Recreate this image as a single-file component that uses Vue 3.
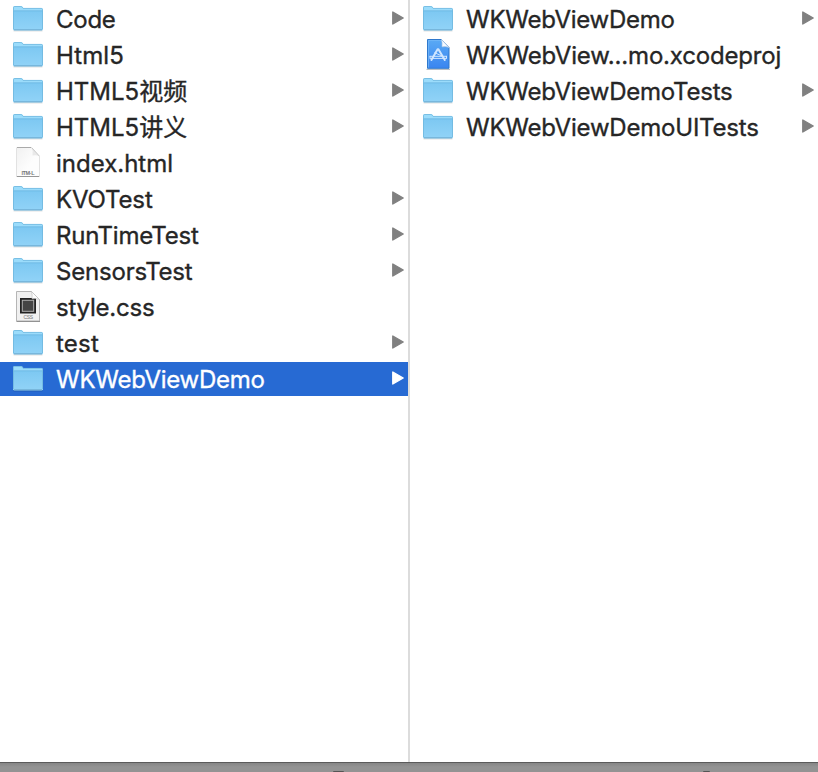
<script setup>
const columns = [
  [
    { name: 'Code', type: 'folder', tracking: -0.25 },
    { name: 'Html5', type: 'folder', tracking: 0.1 },
    { name: 'HTML5视频', type: 'folder', tracking: 0 },
    { name: 'HTML5讲义', type: 'folder', tracking: 0 },
    { name: 'index.html', type: 'html', tracking: 0 },
    { name: 'KVOTest', type: 'folder', tracking: -0.15 },
    { name: 'RunTimeTest', type: 'folder', tracking: -0.2 },
    { name: 'SensorsTest', type: 'folder', tracking: -0.2 },
    { name: 'style.css', type: 'css', tracking: -0.22 },
    { name: 'test', type: 'folder', tracking: 0.2 },
    { name: 'WKWebViewDemo', type: 'folder', tracking: -0.25, selected: true },
  ],
  [
    { name: 'WKWebViewDemo', type: 'folder', tracking: -0.25 },
    { name: 'WKWebView...mo.xcodeproj', type: 'xcode', tracking: -0.18 },
    { name: 'WKWebViewDemoTests', type: 'folder', tracking: -0.23 },
    { name: 'WKWebViewDemoUITests', type: 'folder', tracking: -0.21 },
  ],
]
</script>

<template>
  <main class="browser">
    <svg class="defs" width="0" height="0" aria-hidden="true">
      <defs>
        <linearGradient id="folderFill" x1="0" y1="0" x2="0" y2="1">
          <stop offset="0" stop-color="#7dc8f2" />
          <stop offset="1" stop-color="#91d3f7" />
        </linearGradient>
        <linearGradient id="xcodeFill" x1="0" y1="0" x2="0" y2="1">
          <stop offset="0" stop-color="#5aaaf5" />
          <stop offset="1" stop-color="#3a85f0" />
        </linearGradient>
        <linearGradient id="paperFill" x1="0" y1="0" x2="1" y2="1">
          <stop offset="0" stop-color="#f1f1f1" />
          <stop offset=".6" stop-color="#fdfdfd" />
        </linearGradient>
      </defs>
    </svg>
    <div class="columns">
      <ul v-for="(items, c) in columns" :key="c" class="column">
        <li v-for="item in items" :key="item.name" class="row" :class="{ selected: item.selected }">
          <svg v-if="item.type === 'folder'" class="icon" viewBox="0 0 32 34">
            <path d="M1.5 28.800h29" stroke="#000" stroke-opacity=".2" />
            <path d="M1 27V5.500Q1 4 2.500 4H9q1 0 1.600.8l.8 1.100H29.500Q31 5.900 31 7.400V27Q31 28.300 29.700 28.300H2.300Q1 28.300 1 27Z" fill="#9bdcfb" />
            <path d="M1 9H31V27Q31 28.300 29.700 28.300H2.300Q1 28.300 1 27Z" fill="url(#folderFill)" />
            <path d="M1.500 8.800h29" stroke="#68b4df" stroke-width=".8" />
            <path d="M1.500 27V5.700Q1.500 4.500 2.700 4.500H8.800q.9 0 1.400.7l.9 1.200H29.300Q30.500 6.400 30.500 7.600V27" fill="none" stroke="#6db5dc" stroke-opacity=".75" />
            <path d="M2 27.800H30" stroke="#6eacd0" />
          </svg>
          <svg v-else-if="item.type === 'html'" class="icon" viewBox="0 0 32 34">
            <path d="M5 1.500H20L27 9.500V30.500H5Z" fill="url(#paperFill)" />
            <path d="M4.500 30.500V1.500M27.500 10V30.500" stroke="#e2e2e2" />
            <path d="M5 1.500H19" stroke="#aaa" />
            <path d="M19.500 1.500Q21.500 5 20.500 9.500Q25 8.500 27 10.500Z" fill="#e9e9e9" />
            <path d="M19.500 1.500L27.300 10" stroke="#c4c4c4" />
            <path d="M4.800 30.500H27.200" stroke="#969696" />
            <text x="9.500" y="28.500" textLength="13" class="stamp">ITM·L</text>
          </svg>
          <svg v-else-if="item.type === 'css'" class="icon" viewBox="0 0 32 34">
            <path d="M4.500 1.500H19.500L27.500 9.500V31H4.500Z" fill="#f0f0f0" stroke="#b5b5b5" />
            <path d="M4.500 31.500H28" stroke="#929292" />
            <rect x="8" y="8" width="16" height="15.500" fill="#222" />
            <rect x="10.300" y="10.300" width="11.400" height="11" fill="#444" stroke="#b0b0b0" />
            <path d="M19.500 1.500Q20.500 5 20 8.800Q24 8 27.500 9.500Z" fill="#fff" stroke="#bbb" stroke-width=".6" />
            <text x="11.500" y="29" textLength="9.500" class="stamp light">CSS</text>
          </svg>
          <svg v-else class="icon" viewBox="0 0 32 34">
            <path d="M4.500 31.400H28" stroke="#8b9198" stroke-opacity=".65" />
            <path d="M5.500 1.500H19.500L27 9.500V30.300H5.500Z" fill="url(#xcodeFill)" stroke="#2f78cc" />
            <path d="M6.500 29.500V2.500H19.500" fill="none" stroke="#76b9f8" stroke-width=".7" />
            <path d="M19.500 1.500Q20.500 5 20 8.800Q24 8 27 9.500Z" fill="#f6faff" stroke="#b6cbe2" stroke-width=".6" />
            <g fill="none" stroke="#cfe6ff" stroke-linecap="round">
              <path d="M15.600 11.200L9.400 22M16.400 11.200L22.800 22" stroke-width="2" />
              <path d="M8 18.300H24.500M8.500 20.400H24" stroke-width="1" />
              <path d="M8 18.300V20.400M24.500 18.300V20.400M12.800 14.800L20 18" stroke-width="1" />
            </g>
          </svg>
          <span class="name" :style="{ letterSpacing: item.tracking + 'px' }">{{ item.name }}</span>
          <svg v-if="item.type === 'folder'" class="arrow" viewBox="0 0 12 14">
            <path d="M.8 1V13L11.200 7Z" fill="currentColor" stroke="currentColor" stroke-width="1.400" stroke-linejoin="round" />
          </svg>
        </li>
      </ul>
    </div>
    <footer class="edge">
      <span class="peek wide"></span>
      <span class="peek"></span>
    </footer>
  </main>
</template>

<style>
body { margin: 0; background: #fff; overflow: hidden; }
</style>

<style scoped>
.browser {
  width: 818px;
  height: 772px;
  display: flex;
  flex-direction: column;
  overflow: hidden;
  background: #fff;
  color: #262626;
  font-family: Inter, "Noto Sans CJK SC", sans-serif;
}
.defs { position: absolute; }
.columns { height: 762px; display: grid; grid-template-columns: 410px 408px; }
.column {
  list-style: none;
  margin: 0;
  padding: 2px 0 0;
  display: flex;
  flex-direction: column;
  gap: 2px;
}
.column:first-child { border-right: 2px solid #dcdcdc; }
.row {
  height: 34px;
  box-sizing: border-box;
  padding: 0 4px 0 12px;
  display: flex;
  align-items: center;
}
.selected { background: #276ad3; color: #fff; }
.icon { width: 32px; height: 34px; flex: none; }
.name {
  flex: 1;
  margin-left: 12px;
  padding-top: 2px;
  font-size: 24px;
  line-height: 34px;
  white-space: nowrap;
  -webkit-text-stroke: .35px currentColor;
}
.arrow { width: 12px; height: 14px; flex: none; color: #808080; margin-bottom: 2px; }
.selected .arrow { color: #fff; }
.stamp { font-family: "Liberation Sans", sans-serif; font-size: 5.5px; font-weight: 700; fill: #777; }
.stamp.light { font-size: 5px; font-weight: 400; }
.edge {
  height: 10px;
  box-sizing: border-box;
  border-top: 1px solid #5b5b5b;
  background: linear-gradient(#868686, #939393 4px);
  display: flex;
  align-items: flex-end;
  padding-left: 333px;
  gap: 359px;
}
.peek { width: 7px; height: 1px; background: #555; border-radius: 4px 4px 0 0; }
.peek.wide { width: 11px; }
</style>
